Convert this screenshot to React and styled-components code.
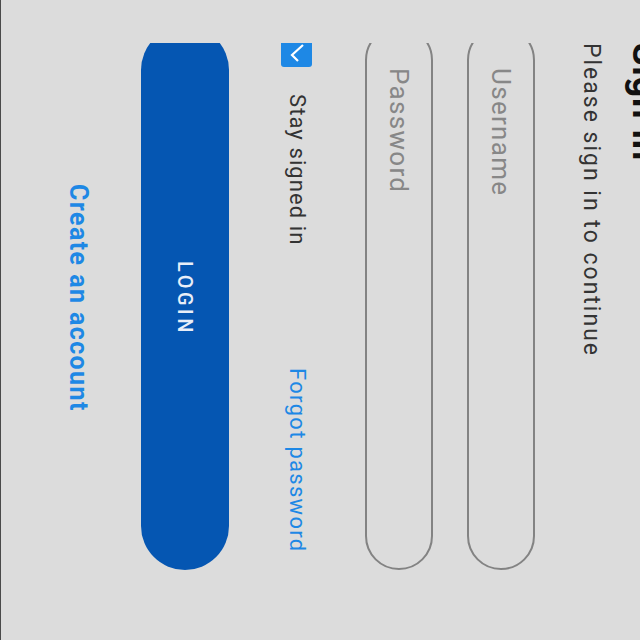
import React from "react";
import styled, { createGlobalStyle } from "styled-components";

const GlobalStyle = createGlobalStyle`
  html, body { margin: 0; padding: 0; background: #dcdcdc; }
  body { font-family: Roboto, "Liberation Sans", Arial, sans-serif; }
`;

const Screen = styled.main`
  width: 640px;
  height: 640px;
  box-sizing: border-box;
  writing-mode: vertical-rl;
  overflow: hidden;
  background: #dcdcdc;
  border-left: 1px solid #4a4a4a;
  padding-inline-start: 43px;
`;

const Heading = styled.h1`
  margin: 0;
  margin-block-start: -23px;
  font-size: 36px;
  line-height: 36px;
  font-weight: 700;
  color: #111;
  letter-spacing: 1px;
`;

const Subtitle = styled.p`
  margin: 0;
  margin-block-start: 24.5px;
  font-size: 23px;
  line-height: 23px;
  color: #333;
  letter-spacing: 2px;
`;

const FormClip = styled.div`
  overflow: hidden;
`;

const FormInner = styled.form`
  margin: 0;
  margin-inline-start: -17px;
  inline-size: 544px;
  padding-block-end: 12px;
  display: flex;
  flex-direction: column;
`;

const Field = styled.div`
  margin-block-start: ${(p) => p.$gap}px;
  block-size: 68px;
  box-sizing: border-box;
  border: 2px solid #838383;
  border-radius: 34px;
  display: flex;
  align-items: center;
  padding-inline-start: 40px;
`;

const Placeholder = styled.span`
  font-size: 26px;
  line-height: 26px;
  letter-spacing: 1.3px;
  color: #878787;
`;

const OptionsRow = styled.div`
  margin-block-start: 53px;
  block-size: 31px;
  display: flex;
  align-items: center;
`;

const Checkbox = styled.span`
  margin-inline-start: 10px;
  inline-size: 31px;
  block-size: 31px;
  border-radius: 3px;
  background: #1e88e5;
  display: flex;
  flex-shrink: 0;
`;

const RowText = styled.span`
  font-size: 22px;
  line-height: 22px;
  letter-spacing: ${(p) => (p.$link ? "1.3px" : "1.1px")};
  color: ${(p) => (p.$link ? "#1e88e5" : "#333")};
  margin-inline-start: ${(p) => (p.$link ? "auto" : "27px")};
  margin-inline-end: ${(p) => (p.$link ? "17px" : "0")};
`;

const LoginButton = styled.button`
  margin: 0;
  margin-block-start: 52px;
  block-size: 88px;
  inline-size: 100%;
  border: none;
  border-radius: 44px;
  background: #0556b2;
  color: #e8eef8;
  font-family: inherit;
  font-size: 20px;
  font-weight: 500;
  letter-spacing: 3.5px;
  padding: 0;
  writing-mode: vertical-rl;
  cursor: pointer;
`;

const CreateLink = styled.a`
  margin-block-start: 50px;
  display: block;
  text-align: center;
  font-size: 25px;
  line-height: 25px;
  font-weight: 700;
  letter-spacing: 1.4px;
  color: #1e88e5;
  text-decoration: none;
`;

export default function App() {
  return (
    <>
      <GlobalStyle />
      <Screen>
        <Heading>Sign in</Heading>
        <Subtitle>Please sign in to continue</Subtitle>
        <FormClip>
          <FormInner onSubmit={(e) => e.preventDefault()}>
            <Field $gap={44.5}>
              <Placeholder>Username</Placeholder>
            </Field>
            <Field $gap={34}>
              <Placeholder>Password</Placeholder>
            </Field>
            <OptionsRow>
              <Checkbox>
                <svg width="31" height="31" viewBox="0 0 31 31">
                  <path
                    d="M22 9 L11 19 L17 25"
                    fill="none"
                    stroke="#fff"
                    strokeWidth="2.2"
                  />
                </svg>
              </Checkbox>
              <RowText>Stay signed in</RowText>
              <RowText $link>Forgot password</RowText>
            </OptionsRow>
            <LoginButton type="submit">LOGIN</LoginButton>
            <CreateLink href="#">Create an account</CreateLink>
          </FormInner>
        </FormClip>
      </Screen>
    </>
  );
}
